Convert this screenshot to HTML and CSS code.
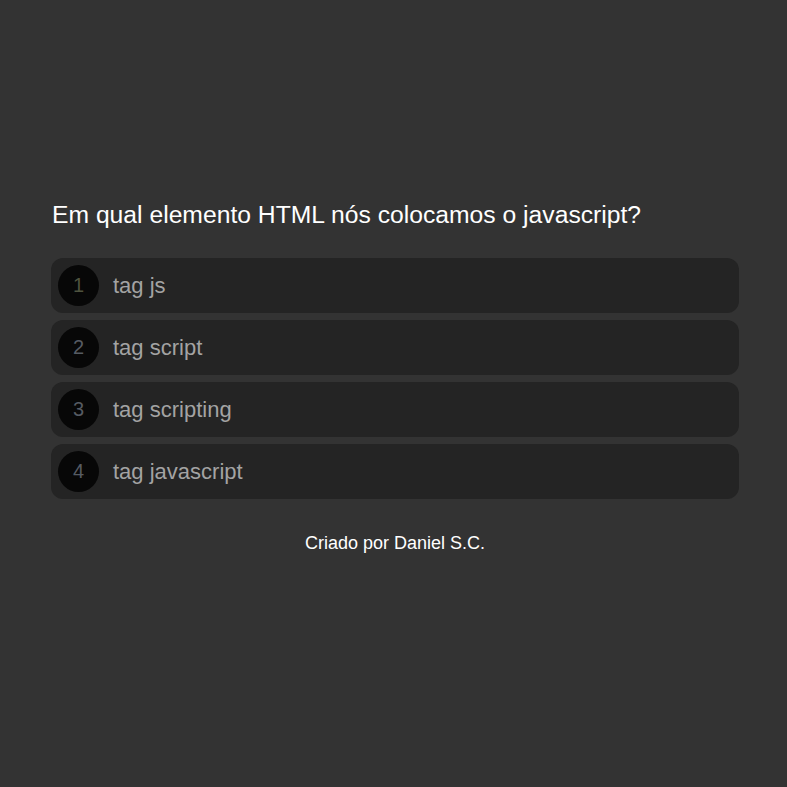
FILE: index.html
```html
<!DOCTYPE html>
<html lang="pt">
<head>
<meta charset="utf-8">
<title>Quiz</title>
<link rel="stylesheet" href="styles.css">
</head>
<body>
<main class="quiz">
  <h1 class="question">Em qual elemento HTML nós colocamos o javascript?</h1>
  <ul class="answers">
    <li class="answer"><span class="num num-first">1</span><span class="label">tag js</span></li>
    <li class="answer"><span class="num">2</span><span class="label">tag script</span></li>
    <li class="answer"><span class="num">3</span><span class="label">tag scripting</span></li>
    <li class="answer"><span class="num">4</span><span class="label">tag javascript</span></li>
  </ul>
  <p class="footer">Criado por Daniel S.C.</p>
</main>
</body>
</html>
```
FILE: styles.css
```css
html, body {
  margin: 0;
  padding: 0;
  background: #333333;
  height: 100%;
}
body {
  font-family: "Liberation Sans", Arial, sans-serif;
}
.quiz {
  width: 688px;
  margin-left: 51px;
  padding-top: 201px;
}
.question {
  margin: 0 0 29px 1px;
  font-size: 24.7px;
  font-weight: normal;
  line-height: 28px;
  color: #ffffff;
}
.answers {
  list-style: none;
  margin: 0;
  padding: 0;
  display: flex;
  flex-direction: column;
  gap: 7px;
}
.answer {
  height: 55px;
  box-sizing: border-box;
  background: #242424;
  border-radius: 12px;
  display: flex;
  align-items: center;
  padding-left: 7px;
}
.num {
  width: 41px;
  height: 41px;
  border-radius: 50%;
  background: #070707;
  color: #565b63;
  font-size: 20px;
  display: flex;
  align-items: center;
  justify-content: center;
  flex-shrink: 0;
}
.num-first {
  color: #4f533f;
}
.label {
  margin-left: 14px;
  font-size: 22px;
  color: #a3a3a3;
}
.footer {
  margin: 34px 0 0;
  text-align: center;
  font-size: 18px;
  line-height: 21px;
  color: #ffffff;
}
```
